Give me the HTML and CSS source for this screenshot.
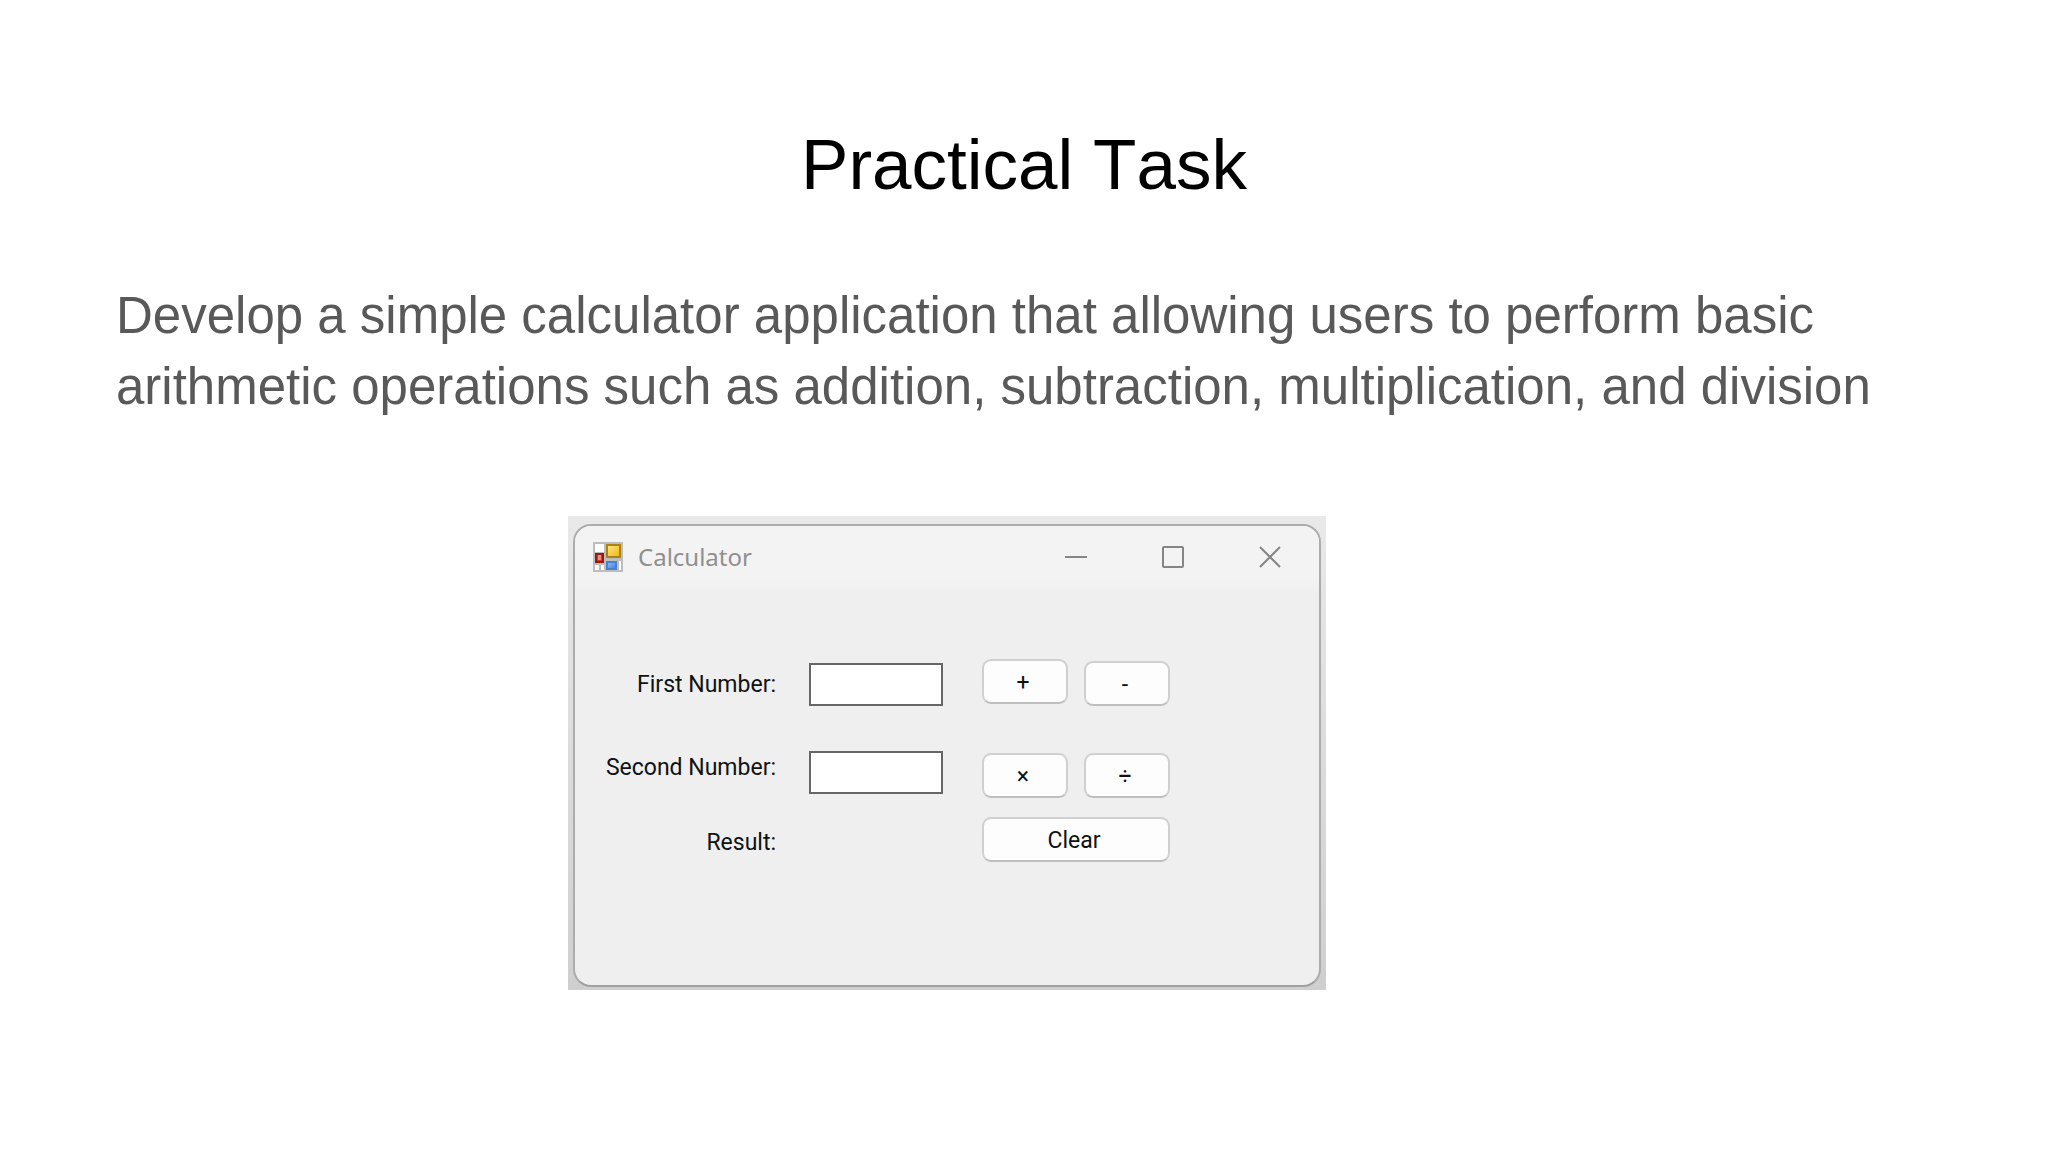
FILE: index.html
```html
<!DOCTYPE html>
<html lang="en">
<head>
    <meta charset="UTF-8">
    <meta name="viewport" content="width=device-width, initial-scale=1.0">
    <title>Practical Task</title>
    <link rel="stylesheet" href="styles.css">
</head>
<body>
    <main class="slide">
        <h1>Practical Task</h1>
        <p class="task">Develop a simple calculator application that allowing users to perform basic arithmetic operations such as addition, subtraction, multiplication, and division</p>

        <div class="backdrop">
            <section class="window">
                <header class="title-bar">
                    <svg class="app-icon" viewBox="0 0 30 30" aria-hidden="true">
                        <defs>
                            <linearGradient id="yellow" x1="0" y1="0" x2="1" y2="1">
                                <stop offset="0" stop-color="#ffe98a"/>
                                <stop offset="1" stop-color="#eeb408"/>
                            </linearGradient>
                            <linearGradient id="blue" x1="0" y1="0" x2="1" y2="1">
                                <stop offset="0" stop-color="#8fc0fa"/>
                                <stop offset="1" stop-color="#3f7fdc"/>
                            </linearGradient>
                        </defs>
                        <rect width="30" height="30" fill="#bdbdbd"/>
                        <rect x="2" y="2" width="9" height="8" fill="#fff"/>
                        <rect x="2" y="23" width="4" height="5" fill="#fff"/>
                        <rect x="8" y="23" width="3" height="5" fill="#fff"/>
                        <rect x="26" y="19" width="2" height="9" fill="#fff"/>
                        <rect x="3" y="12" width="7" height="8" fill="#d23a2a" stroke="#961a10" stroke-width="2"/>
                        <rect x="5" y="13" width="3" height="5" fill="#ee8d80"/>
                        <rect x="14" y="3" width="13" height="12" fill="url(#yellow)" stroke="#a98415" stroke-width="2"/>
                        <rect x="14" y="20" width="9" height="7" fill="url(#blue)" stroke="#4a80d0" stroke-width="2"/>
                    </svg>
                    <h2>Calculator</h2>
                    <div class="window-controls">
                        <button type="button" aria-label="Minimize">
                            <svg viewBox="0 0 22 22"><path d="M0 11H22"/></svg>
                        </button>
                        <button type="button" aria-label="Maximize">
                            <svg viewBox="0 0 22 22"><rect x="1" y="1" width="20" height="20" rx="1"/></svg>
                        </button>
                        <button type="button" aria-label="Close">
                            <svg viewBox="0 0 22 22"><path d="M1 1L21 21M21 1L1 21"/></svg>
                        </button>
                    </div>
                </header>

                <form class="calculator">
                    <div class="row">
                        <label for="first">First Number:</label>
                        <input type="text" id="first">
                        <div class="buttons">
                            <button type="button">+</button>
                            <button type="button" class="lower">-</button>
                        </div>
                    </div>
                    <div class="row row-second">
                        <label for="second">Second Number:</label>
                        <input type="text" id="second">
                        <div class="buttons">
                            <button type="button" class="lower">×</button>
                            <button type="button" class="lower">÷</button>
                        </div>
                    </div>
                    <div class="row row-result">
                        <label for="result">Result:</label>
                        <output id="result"></output>
                        <div class="buttons">
                            <button type="reset" class="clear">Clear</button>
                        </div>
                    </div>
                </form>
            </section>
        </div>
    </main>
</body>
</html>
```

FILE: styles.css
```css
* {
    box-sizing: border-box;
}
body {
    font-family: "Liberation Sans", Arial, sans-serif;
    margin: 0;
    background-color: #fff;
}
.slide {
    padding: 125px 116px;
}
h1 {
    margin: 0;
    color: #000;
    font-size: 71px;
    font-weight: normal;
    font-kerning: none;
    line-height: 80px;
    text-align: center;
}
.task {
    margin: 75px 0 0;
    color: #595959;
    font-size: 51px;
    line-height: 71px;
}
.backdrop {
    max-width: 758px;
    margin: 94px 0 0 452px;
    padding: 8px 5px 3px;
    background: linear-gradient(#e9e9e9, #cfcfcf);
}
.window {
    border: 2px solid #acacac;
    border-bottom-color: #a0a0a0;
    border-radius: 18px;
    background-color: #efefef;
    overflow: hidden;
}
.title-bar {
    display: flex;
    align-items: center;
    height: 67px;
    padding: 0 38px 6px 18px;
    background: linear-gradient(#f3f3f3 80%, #efefef);
}
.app-icon {
    width: 30px;
    height: 30px;
}
.title-bar h2 {
    margin: 0 0 0 15px;
    color: #8f8f8f;
    font-family: "Noto Sans", sans-serif;
    font-size: 24px;
    font-weight: normal;
}
.window-controls {
    display: flex;
    gap: 75px;
    margin-left: auto;
}
.window-controls button {
    padding: 0;
    border: none;
    background: none;
}
.window-controls svg {
    display: block;
    width: 22px;
    height: 22px;
    fill: none;
    stroke: #858585;
    stroke-width: 2;
}
.calculator {
    padding: 66px 0 121px;
    color: #111;
    font-family: Roboto, sans-serif;
    font-size: 23px;
}
.row {
    display: grid;
    grid-template-columns: 201px 134px 188px;
    column-gap: 33px;
    align-items: end;
    height: 47px;
}
.row label {
    align-self: center;
    padding-top: 3px;
    text-align: right;
}
.row input {
    width: 100%;
    height: 43px;
    padding: 0 8px;
    border: 2px solid #666;
    background-color: #fff;
    font: inherit;
}
.row-second {
    align-items: start;
    margin-top: 45px;
}
.row-second label {
    align-self: start;
}
.row-result {
    margin-top: 19px;
}
.buttons {
    display: flex;
    justify-content: space-between;
    align-self: stretch;
    align-items: flex-start;
    margin-left: 6px;
    margin-right: -6px;
}
.buttons button {
    width: 86px;
    height: 45px;
    padding: 2px 4px 0 0;
    border: 2px solid #d0d0d0;
    border-bottom-color: #bfbfbf;
    border-radius: 9px;
    background-color: #fdfdfd;
    color: #111;
    font: inherit;
}
.buttons .lower {
    align-self: flex-end;
}
.buttons .clear {
    width: 100%;
}
```
